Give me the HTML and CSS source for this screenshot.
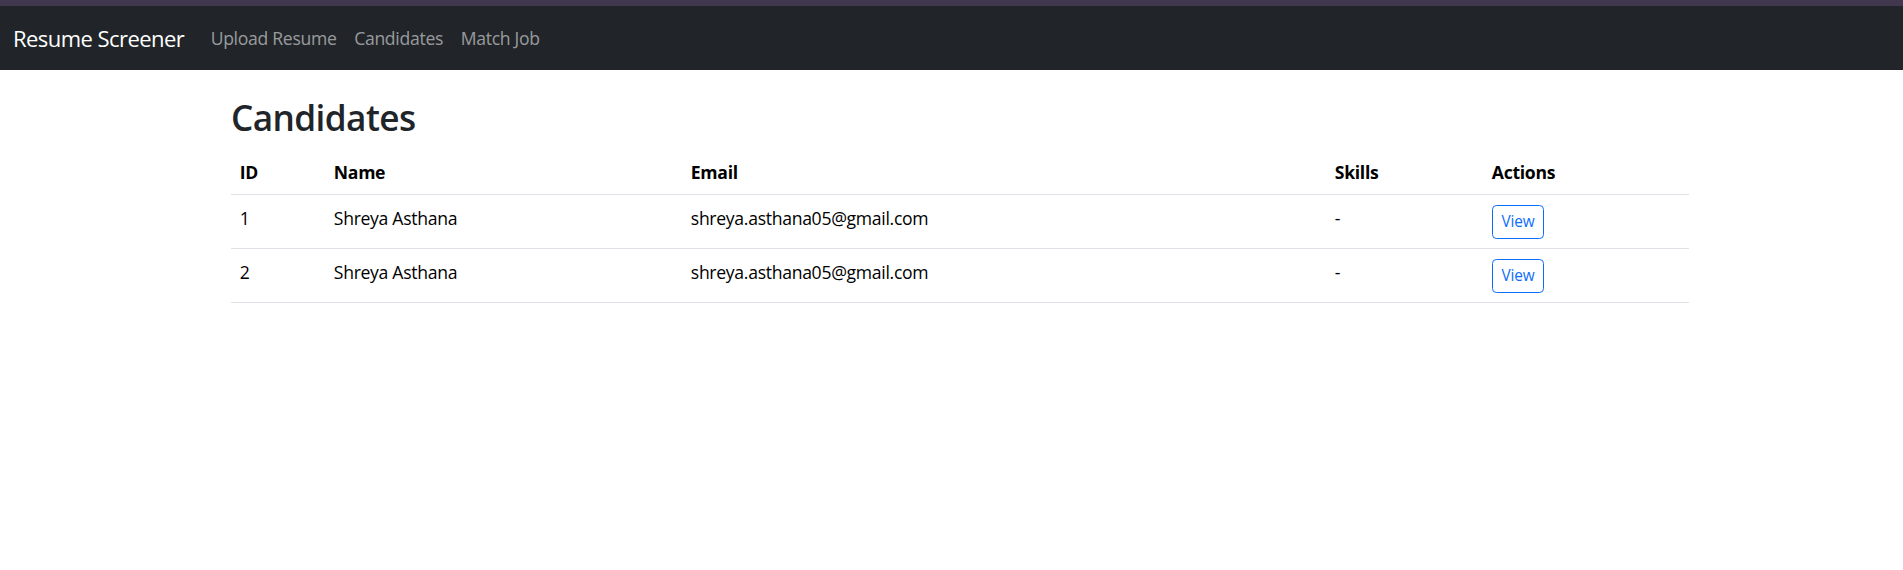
FILE: index.html
```html
<!DOCTYPE html>
<html lang="en">
<head>
<meta charset="utf-8">
<title>Candidates - Resume Screener</title>
<link rel="stylesheet" href="styles.css">
</head>
<body>
<div class="top-strip"></div>
<nav class="navbar">
  <a class="brand" href="#">Resume Screener</a>
  <ul class="nav">
    <li><a class="nav-link" href="#">Upload Resume</a></li>
    <li><a class="nav-link" href="#">Candidates</a></li>
    <li><a class="nav-link" href="#">Match Job</a></li>
  </ul>
</nav>
<main class="container">
  <h2 class="page-title">Candidates</h2>
  <table class="table">
    <colgroup>
      <col class="c-id"><col class="c-name"><col class="c-email"><col class="c-skills"><col class="c-actions">
    </colgroup>
    <thead>
      <tr><th>ID</th><th>Name</th><th>Email</th><th>Skills</th><th>Actions</th></tr>
    </thead>
    <tbody>
      <tr><td>1</td><td>Shreya Asthana</td><td>shreya.asthana05@gmail.com</td><td>-</td><td><a class="btn-view" href="#">View</a></td></tr>
      <tr><td>2</td><td>Shreya Asthana</td><td>shreya.asthana05@gmail.com</td><td>-</td><td><a class="btn-view" href="#">View</a></td></tr>
    </tbody>
  </table>
</main>
</body>
</html>
```
FILE: styles.css
```css
* { box-sizing: border-box; }
html, body {
  margin: 0;
  padding: 0;
  background: #fff;
}
body {
  font-family: "Open Sans", "Noto Sans", sans-serif;
  font-size: 17.6px;
  line-height: 1.5;
  color: #212529;
}
.top-strip {
  height: 6px;
  background: #41374f;
}
.navbar {
  height: 64px;
  background: #212529;
  display: flex;
  align-items: center;
  padding: 0 13px;
}
.brand {
  font-size: 22px;
  line-height: 33px;
  color: #fff;
  text-decoration: none;
  margin-right: 17.6px;
  letter-spacing: -0.55px;
}
.nav {
  display: flex;
  list-style: none;
  margin: 0;
  padding: 0;
}
.nav-link {
  display: block;
  padding: 0 8.8px;
  color: rgba(255, 255, 255, 0.55);
  text-decoration: none;
  letter-spacing: -0.3px;
}
.container {
  width: 1458px;
  margin-left: 231px;
  padding-top: 26.4px;
}
.page-title {
  font-size: 35.2px;
  font-weight: 550;
  line-height: 1.2;
  margin: 0 0 11.8px;
  letter-spacing: -0.6px;
  color: #212529;
}
.table {
  width: 1458px;
  border-collapse: collapse;
  table-layout: fixed;
  color: #000;
}
.c-id { width: 94px; }
.c-name { width: 357px; }
.c-email { width: 644px; }
.c-skills { width: 157px; }
.c-actions { width: 206px; }
.table th, .table td {
  padding: 9.5px 8.8px;
  text-align: left;
  vertical-align: top;
  border-bottom: 1px solid #dee2e6;
  letter-spacing: -0.3px;
}
.table th {
  font-weight: 700;
  vertical-align: bottom;
  padding-top: 8.8px;
  padding-bottom: 8.8px;
}
.btn-view {
  display: inline-block;
  font-size: 15.4px;
  line-height: 1.5;
  padding: 4.4px 8.8px;
  border: 1px solid #0d6efd;
  border-radius: 4.4px;
  color: #0d6efd;
  text-decoration: none;
  letter-spacing: -0.2px;
}
```
